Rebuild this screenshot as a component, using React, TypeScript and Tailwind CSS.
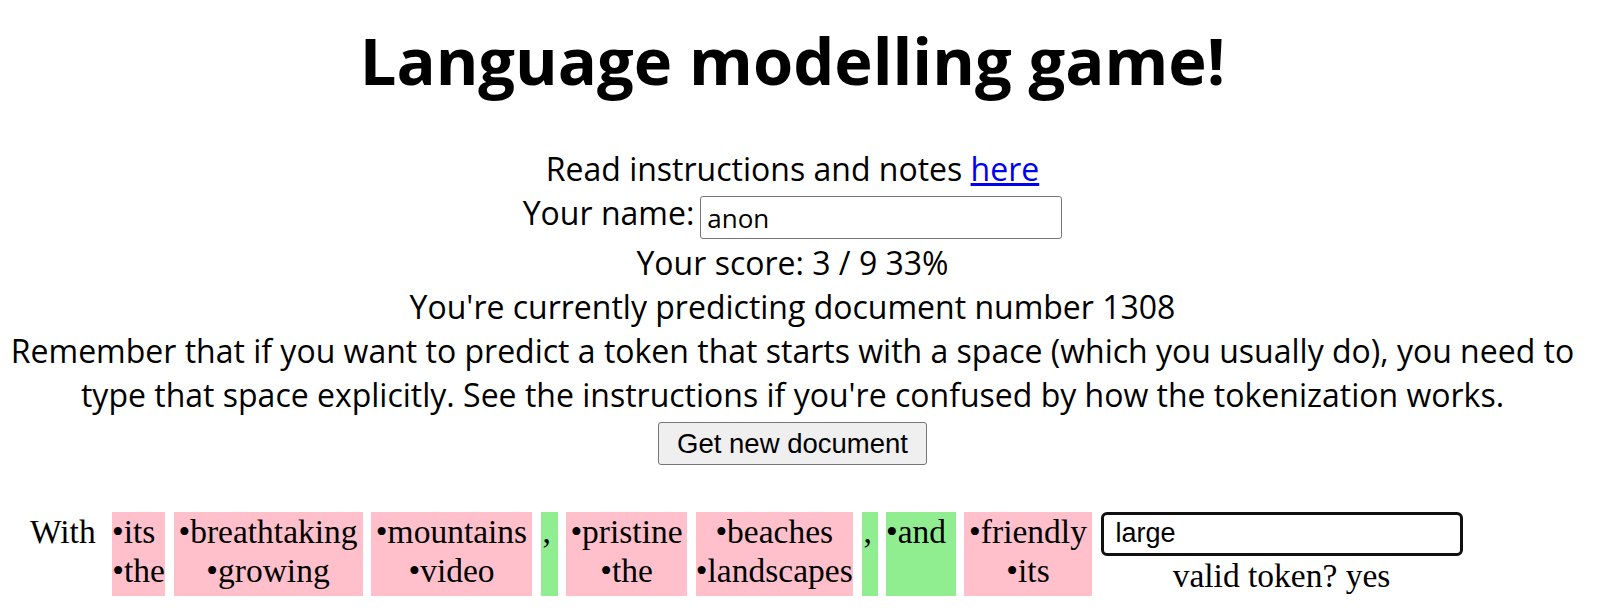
type Token = {
  top: string;
  bottom?: string;
  width: string;
  color: string;
  align: string;
  topAlign?: string;
};

const tokens: Token[] = [
  { top: "•its", bottom: "•the", width: "w-[53px]", color: "bg-[#ffc0cb]", align: "text-center", topAlign: "text-left" },
  { top: "•breathtaking", bottom: "•growing", width: "w-[189px]", color: "bg-[#ffc0cb]", align: "text-center" },
  { top: "•mountains", bottom: "•video", width: "w-[161px]", color: "bg-[#ffc0cb]", align: "text-center" },
  { top: ",", width: "w-[17px]", color: "bg-[#90ee90]", align: "text-left pl-[2px]" },
  { top: "•pristine", bottom: "•the", width: "w-[121px]", color: "bg-[#ffc0cb]", align: "text-center" },
  { top: "•beaches", bottom: "•landscapes", width: "w-[157.5px]", color: "bg-[#ffc0cb]", align: "text-center" },
  { top: ",", width: "w-[16px]", color: "bg-[#90ee90]", align: "text-left pl-[2px]" },
  { top: "•and", width: "w-[69.5px]", color: "bg-[#90ee90]", align: "text-left" },
  { top: "•friendly", bottom: "•its", width: "w-[128px]", color: "bg-[#ffc0cb]", align: "text-center" },
];

export default function App() {
  return (
    <div className="w-[1585px] bg-white text-black">
      {/* header + instructions */}
      <div className="text-center font-['Open_Sans',sans-serif] text-[32px]">
        <h1 className="mt-[20px] text-[65px] font-bold leading-[80px]">Language modelling game!</h1>
        <div className="mt-[47px] whitespace-nowrap leading-[44px]">
          Read instructions and notes{" "}
          <a href="#" className="text-[#0000ee] underline">
            here
          </a>
        </div>
        <div className="flex h-[50px] justify-center">
          <span className="leading-[44px]">Your name:</span>
          <input
            className="ml-[6px] mt-[5px] h-[43px] w-[362px] rounded-[3px] border border-[#767676] bg-white px-[6px] font-['Open_Sans',sans-serif] text-[26px] outline-none"
            defaultValue="anon"
          />
        </div>
        <div className="leading-[44px]">Your score: 3 / 9 33%</div>
        <div className="leading-[44px]">You're currently predicting document number 1308</div>
        <div className="whitespace-nowrap leading-[44px]">
          Remember that if you want to predict a token that starts with a space (which you usually do), you need to
          <br />
          type that space explicitly. See the instructions if you're confused by how the tokenization works.
        </div>
        <button className="mx-auto mt-[5px] block h-[43px] w-[269px] rounded-[3px] border border-[#767676] bg-[#efefef] font-['Liberation_Sans',Arial,sans-serif] text-[27.5px]">
          Get new document
        </button>
      </div>

      {/* token row */}
      <div className="mt-[47px] flex items-start gap-[8.5px] pl-[30px] font-['Liberation_Serif','Times_New_Roman',serif] text-[33.5px] leading-[39.3px]">
        <div className="w-[73.5px]">With</div>
        {tokens.map((t, i) => (
          <div key={i} className={`h-[84px] whitespace-nowrap ${t.width} ${t.color} ${t.align}`}>
            <div className={t.topAlign}>{t.top}</div>
            {t.bottom && <div>{t.bottom}</div>}
          </div>
        ))}
        <div className="flex w-[362px] flex-col">
          <input
            className="h-[43.5px] w-full rounded-[6px] border-[3.5px] border-[#101010] bg-white pl-[12px] font-['Liberation_Sans',Arial,sans-serif] text-[27px] leading-normal outline-none"
            defaultValue="large"
          />
          <div className="text-center">valid token? yes</div>
        </div>
      </div>
    </div>
  );
}
